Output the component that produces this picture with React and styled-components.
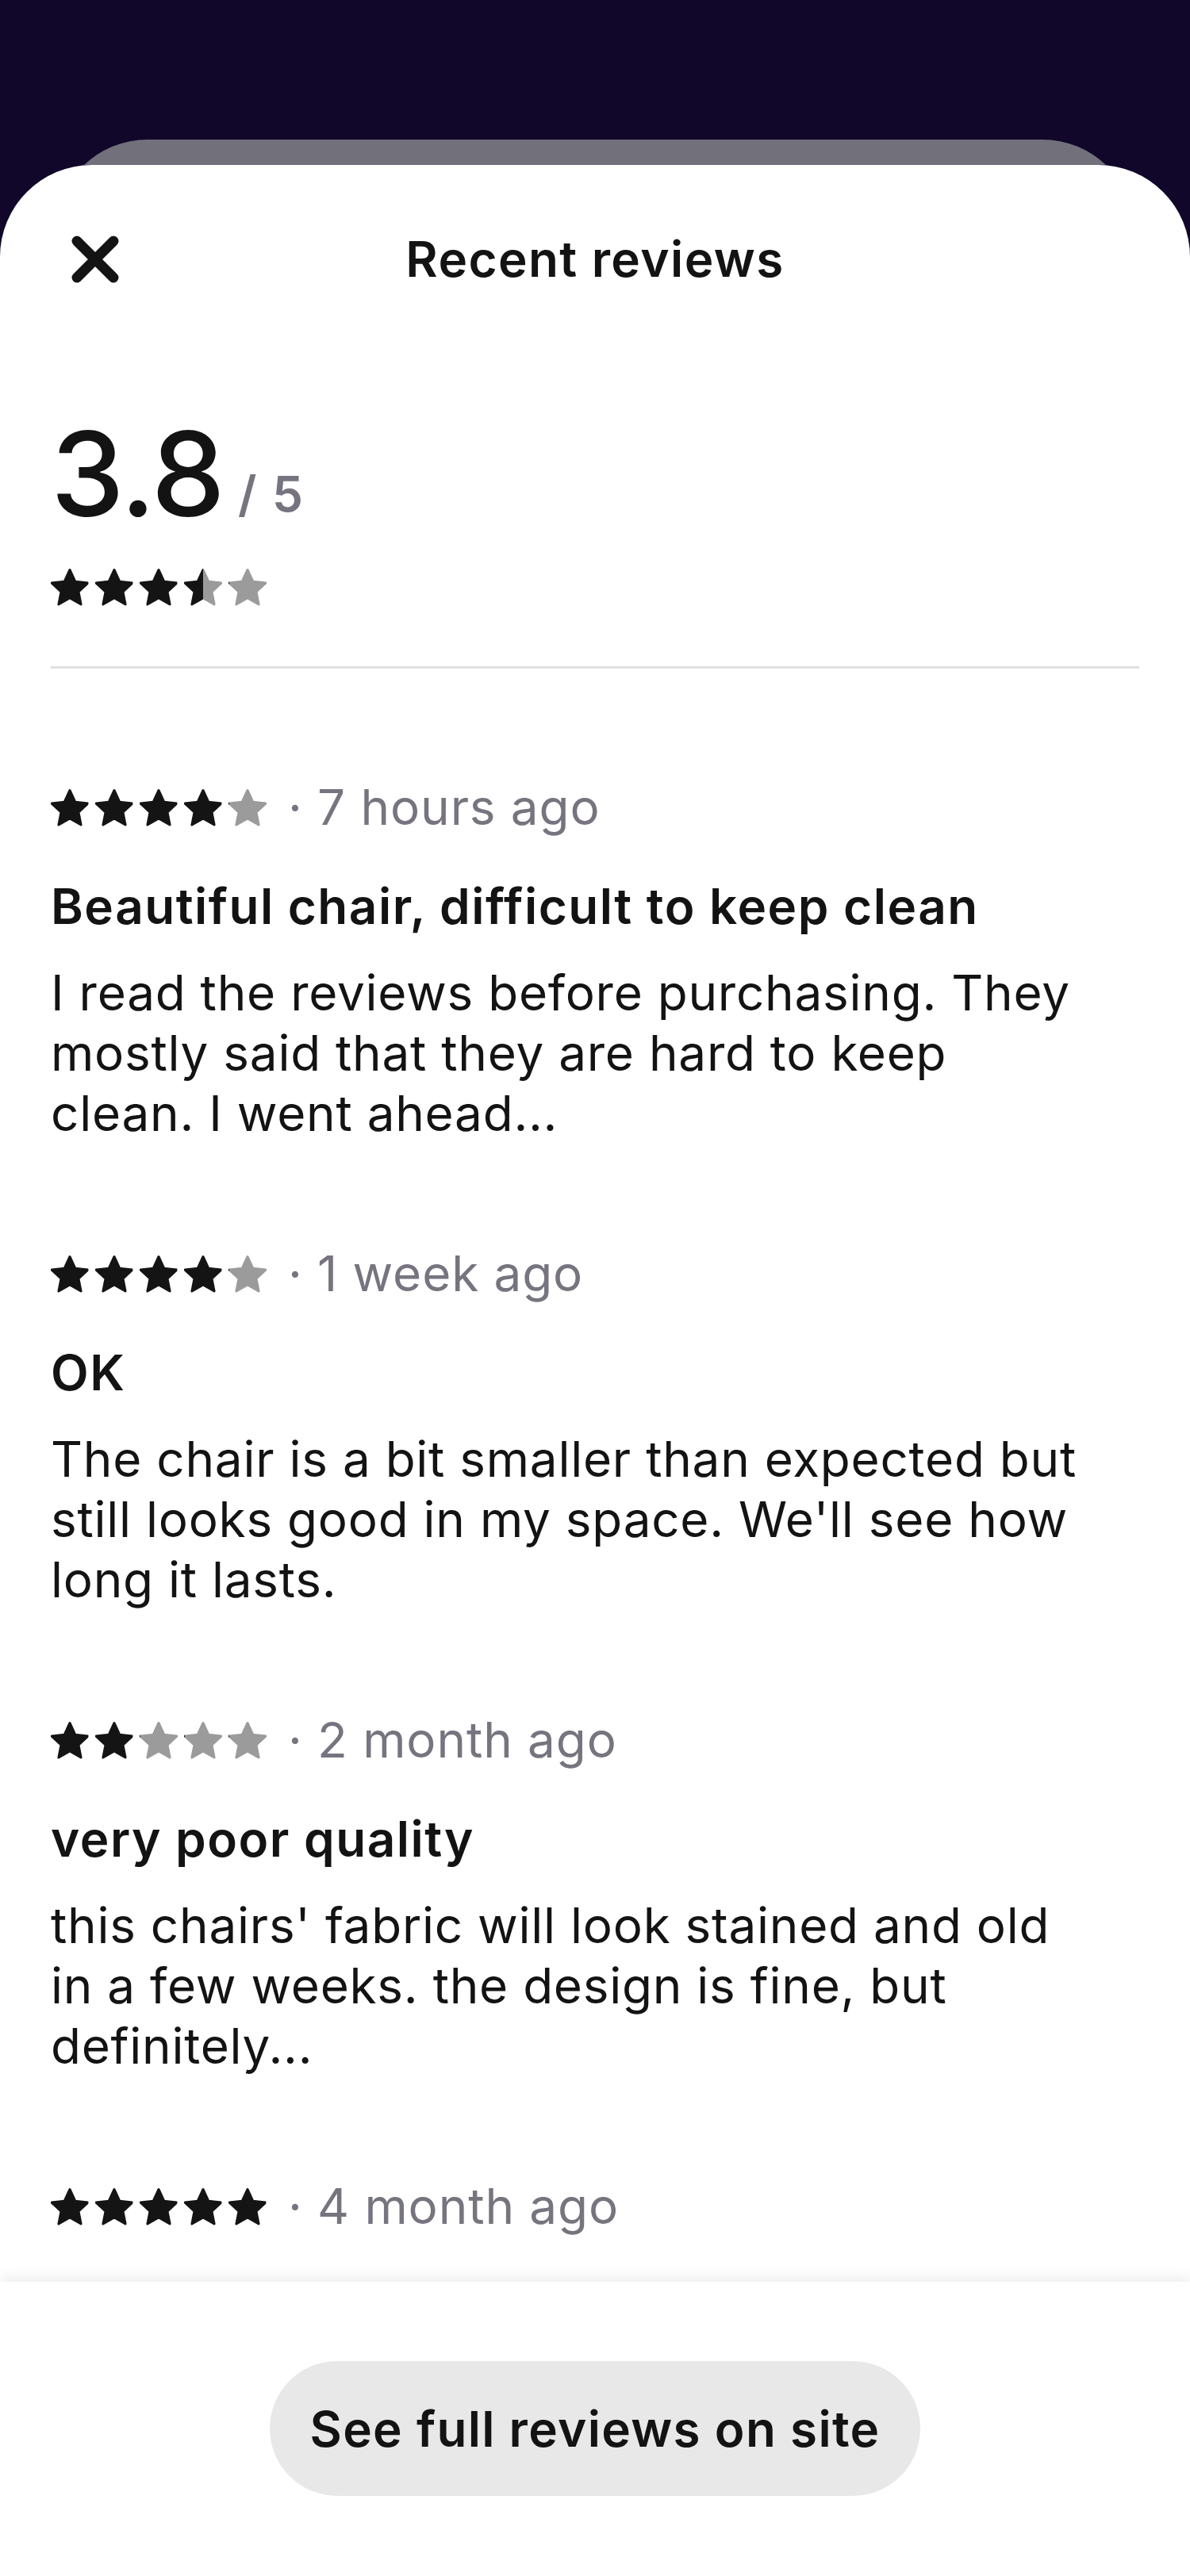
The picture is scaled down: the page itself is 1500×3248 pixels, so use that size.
import React, { useId } from 'react';
import styled, { createGlobalStyle } from 'styled-components';

const GlobalStyle = createGlobalStyle`
    html, body {
        margin: 0;
        padding: 0;
        background: #10072a;
    }
    body {
        font-family: Inter, "Noto Sans", "Liberation Sans", sans-serif;
        color: #131313;
    }
    * {
        box-sizing: border-box;
    }
`;

const Page = styled.div`
    height: 100vh;
    display: flex;
    flex-direction: column;
    padding-top: 176px;
    background: #10072a;
`;

/* the dimmed screen peeking out behind the sheet */
const CardPeek = styled.div`
    flex-shrink: 0;
    height: 32px;
    margin: 0 70px;
    overflow: hidden;
`;

const CardFace = styled.div`
    height: 240px;
    border-radius: 116px;
    background: #72707b;
`;

const Sheet = styled.section`
    flex: 1;
    min-height: 0;
    display: flex;
    flex-direction: column;
    background: #fff;
    border-radius: 116px 116px 0 0;
    overflow: hidden;
`;

const Header = styled.header`
    flex-shrink: 0;
    height: 238px;
    display: grid;
    grid-template-columns: 1fr auto 1fr;
    align-items: center;
`;

const CloseButton = styled.button`
    justify-self: start;
    margin-left: 90px;
    width: 60px;
    height: 60px;
    padding: 0;
    border: 0 none;
    background: transparent;
    display: flex;
    svg {
        display: block;
    }
`;

const Title = styled.h1`
    margin: 0;
    font-size: 62px;
    line-height: 76px;
    font-weight: 600;
    letter-spacing: 1.4px;
    color: #131313;
`;

const Content = styled.div`
    flex: 1;
    min-height: 0;
    overflow: hidden;
    padding: 78px 64px 0;
`;

const ScoreLine = styled.div`
    height: 148px;
    line-height: 148px;
    white-space: nowrap;
`;

const Score = styled.span`
    font-size: 148px;
    font-weight: 500;
    color: #131313;
    letter-spacing: -2px;
`;

const OutOf = styled.span`
    margin-left: 18px;
    font-size: 62px;
    font-weight: 600;
    letter-spacing: 2px;
    color: #77747f;
    vertical-align: 6px;
`;

const StarRow = styled.div`
    display: flex;
    gap: 8px;
    margin-top: ${p => p.$offset || 0}px;
    svg {
        display: block;
        flex-shrink: 0;
    }
`;

const Divider = styled.hr`
    margin: 76px 0 0;
    height: 3px;
    border: 0 none;
    background: #e0e0e0;
`;

const ReviewList = styled.ul`
    margin: 0;
    padding: 137px 0 0;
    list-style: none;
    display: flex;
    flex-direction: column;
    gap: 126px;
`;

const Review = styled.li`
    display: flex;
    flex-direction: column;
`;

const MetaRow = styled.div`
    height: 76px;
    display: flex;
    align-items: center;
`;

const Meta = styled.span`
    margin-left: 27px;
    font-size: 62px;
    line-height: 76px;
    letter-spacing: 0.9px;
    color: #77747f;
    white-space: nowrap;
`;

const ReviewTitle = styled.h3`
    margin: 49px 0 0;
    font-size: 62px;
    line-height: 76px;
    font-weight: 600;
    letter-spacing: 1.5px;
    color: #131313;
`;

const ReviewBody = styled.p`
    margin: 33px 0 0;
    font-size: 62px;
    line-height: 76px;
    font-weight: 400;
    letter-spacing: 0.75px;
    color: #131313;
    white-space: pre-line;
`;

const Footer = styled.footer`
    position: relative;
    flex-shrink: 0;
    height: 371px;
    padding-top: 100px;
    display: flex;
    justify-content: center;
    align-items: flex-start;
    background: #fff;
    box-shadow: 0 -6px 16px rgba(0, 0, 0, 0.07);
`;

const SiteButton = styled.button`
    height: 170px;
    padding: 0 51px;
    border: 0 none;
    border-radius: 85px;
    background: #e8e8e8;
    font-family: inherit;
    font-size: 62px;
    font-weight: 600;
    letter-spacing: 1.3px;
    color: #131313;
`;

const STAR_POINTS = Array.from({ length: 10 }, (_, i) => {
    const r = i % 2 === 0 ? 24 : 11.5;
    const a = ((-90 + i * 36) * Math.PI) / 180;
    return `${(24 + r * Math.cos(a)).toFixed(2)},${(26.5 + r * Math.sin(a)).toFixed(2)}`;
}).join(' ');

function Star({ fill }) {
    const id = 'star' + useId().replace(/[^a-zA-Z0-9]/g, '');
    return (
        <svg width="48" height="48" viewBox="0 0 48 48">
            <defs>
                <linearGradient id={id}>
                    <stop offset={fill} stopColor="#141414" />
                    <stop offset={fill} stopColor="#9b9b9b" />
                </linearGradient>
            </defs>
            <polygon
                points={STAR_POINTS}
                fill={`url(#${id})`}
                stroke={`url(#${id})`}
                strokeWidth="3"
                strokeLinejoin="round"
            />
        </svg>
    );
}

function Stars({ value, offset }) {
    return (
        <StarRow $offset={offset}>
            {[0, 1, 2, 3, 4].map(i => (
                <Star key={i} fill={Math.max(0, Math.min(1, value - i))} />
            ))}
        </StarRow>
    );
}

function CloseIcon() {
    return (
        <svg width="60" height="60" viewBox="0 0 60 60">
            <path
                d="M7 7 L53 53 M53 7 L7 53"
                stroke="#131313"
                strokeWidth="13"
                strokeLinecap="round"
                fill="none"
            />
        </svg>
    );
}

// the last one only peeks out above the footer
const reviews = [
    {
        rating: 4,
        time: '7 hours ago',
        title: 'Beautiful chair, difficult to keep clean',
        body: 'I read the reviews before purchasing. They\nmostly said that they are hard to keep\nclean. I went ahead...',
    },
    {
        rating: 4,
        time: '1 week ago',
        title: 'OK',
        body: "The chair is a bit smaller than expected but\nstill looks good in my space. We'll see how\nlong it lasts.",
    },
    {
        rating: 2,
        time: '2 month ago',
        title: 'very poor quality',
        body: "this chairs' fabric will look stained and old\nin a few weeks. the design is fine, but\ndefinitely...",
    },
    {
        rating: 5,
        time: '4 month ago',
    },
];

export default function App() {
    return (
        <>
            <GlobalStyle />
            <Page>
                <CardPeek>
                    <CardFace />
                </CardPeek>
                <Sheet>
                    <Header>
                        <CloseButton aria-label="Close">
                            <CloseIcon />
                        </CloseButton>
                        <Title>Recent reviews</Title>
                    </Header>
                    <Content>
                        <ScoreLine>
                            <Score>3.8</Score>
                            <OutOf>/ 5</OutOf>
                        </ScoreLine>
                        <Stars value={3.5} offset={44} />
                        <Divider />
                        <ReviewList>
                            {reviews.map((r, i) => (
                                <Review key={i}>
                                    <MetaRow>
                                        <Stars value={r.rating} />
                                        <Meta>· {r.time}</Meta>
                                    </MetaRow>
                                    {r.title && <ReviewTitle>{r.title}</ReviewTitle>}
                                    {r.body && <ReviewBody>{r.body}</ReviewBody>}
                                </Review>
                            ))}
                        </ReviewList>
                    </Content>
                    <Footer>
                        <SiteButton>See full reviews on site</SiteButton>
                    </Footer>
                </Sheet>
            </Page>
        </>
    );
}
